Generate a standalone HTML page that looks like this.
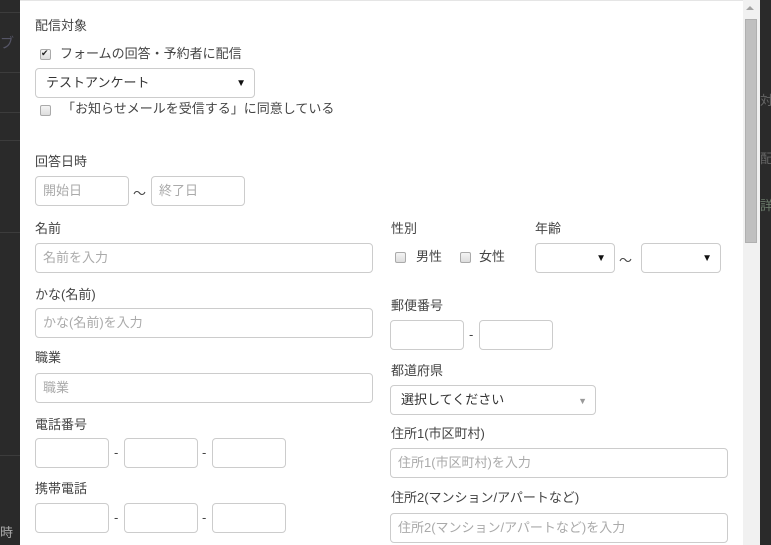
<!DOCTYPE html>
<html><head><meta charset="utf-8"><style>
*{box-sizing:border-box;margin:0;padding:0}
body{width:771px;height:545px;overflow:hidden;background:#2a2a2a;position:relative;font-family:"Liberation Sans","Noto Sans CJK JP",sans-serif;font-size:13px;color:#444}
.a{position:absolute;white-space:nowrap}
.l{line-height:16px}
.in{position:absolute;height:30px;border:1px solid #ccc;border-radius:4px;background:#fff;padding-left:7px;line-height:28px;color:#aaa;font-size:13px}
.cb{position:absolute;width:11px;height:11px;border:1px solid #aaa;border-radius:2px;background:linear-gradient(#f4f4f4,#ddd)}
.ar{position:absolute;right:8px;top:1px;font-size:10px;color:#111}
.ln{position:absolute;left:0;width:20px;height:1px;background:#3c3c3c}
</style></head><body>
<div class="ln" style="top:12px"></div><div class="ln" style="top:72px"></div><div class="ln" style="top:112px"></div><div class="ln" style="top:140px"></div><div class="ln" style="top:232px"></div><div class="ln" style="top:455px"></div>
<div class="a" style="left:0;top:33px;color:#556;font-size:14px">ブ</div>
<div class="a" style="left:0;top:522px;color:#aaa;font-size:13px">時</div>
<div class="a" style="left:760px;top:90px;color:#666;font-size:13px">対</div>
<div class="a" style="left:760px;top:148px;color:#666;font-size:13px">配</div>
<div class="a" style="left:760px;top:195px;color:#6a7a6a;font-size:13px">詳</div>
<div class="a" style="left:20px;top:0;width:723px;height:545px;background:#fff;border-top:1px solid #e5e5e5"></div>
<div class="a" style="left:743px;top:0;width:17px;height:545px;background:#f1f1f1"></div>
<div class="a" style="left:745px;top:19px;width:12px;height:224px;background:#c0c0c0;border:1px solid #b0b0b0"></div>
<div class="a" style="left:746px;top:6px;width:0;height:0;border-left:4px solid transparent;border-right:4px solid transparent;border-bottom:4px solid #a3a3a3"></div>

<div class="a l" style="left:35px;top:18px">配信対象</div>
<div class="cb" style="left:40px;top:49px"></div><div class="a" style="left:41px;top:48px;font-size:9px;line-height:11px;color:#222">✔</div>
<div class="a l" style="left:60px;top:46px">フォームの回答・予約者に配信</div>
<div class="in" style="left:35px;top:68px;width:220px;color:#333;padding-left:10px">テストアンケート<span class="ar">▼</span></div>
<div class="cb" style="left:40px;top:105px"></div>
<div class="a l" style="left:62px;top:101px">「お知らせメールを受信する」に同意している</div>

<div class="a l" style="left:35px;top:154px">回答日時</div>
<div class="in" style="left:35px;top:176px;width:94px">開始日</div>
<div class="a" style="left:133px;top:183px">～</div>
<div class="in" style="left:151px;top:176px;width:94px">終了日</div>

<div class="a l" style="left:35px;top:221px">名前</div>
<div class="in" style="left:35px;top:243px;width:338px">名前を入力</div>
<div class="a l" style="left:391px;top:221px">性別</div>
<div class="a l" style="left:535px;top:221px">年齢</div>
<div class="cb" style="left:395px;top:252px"></div><div class="a l" style="left:416px;top:249px">男性</div>
<div class="cb" style="left:460px;top:252px"></div><div class="a l" style="left:479px;top:249px">女性</div>
<div class="in" style="left:535px;top:243px;width:80px"><span class="ar">▼</span></div>
<div class="a" style="left:619px;top:250px">～</div>
<div class="in" style="left:641px;top:243px;width:80px"><span class="ar">▼</span></div>

<div class="a l" style="left:35px;top:287px">かな(名前)</div>
<div class="in" style="left:35px;top:308px;width:338px">かな(名前)を入力</div>
<div class="a l" style="left:391px;top:298px">郵便番号</div>
<div class="in" style="left:390px;top:320px;width:74px"></div>
<div class="a" style="left:469px;top:327px">-</div>
<div class="in" style="left:479px;top:320px;width:74px"></div>

<div class="a l" style="left:35px;top:350px">職業</div>
<div class="in" style="left:35px;top:373px;width:338px">職業</div>
<div class="a l" style="left:391px;top:363px">都道府県</div>
<div class="in" style="left:390px;top:385px;width:206px;color:#333;padding-left:10px">選択してください<span class="ar" style="color:#999;font-size:9px">▼</span></div>

<div class="a l" style="left:35px;top:417px">電話番号</div>
<div class="in" style="left:35px;top:438px;width:74px"></div>
<div class="a" style="left:114px;top:445px">-</div>
<div class="in" style="left:124px;top:438px;width:74px"></div>
<div class="a" style="left:202px;top:445px">-</div>
<div class="in" style="left:212px;top:438px;width:74px"></div>
<div class="a l" style="left:391px;top:426px">住所1(市区町村)</div>
<div class="in" style="left:390px;top:448px;width:338px">住所1(市区町村)を入力</div>

<div class="a l" style="left:35px;top:481px">携帯電話</div>
<div class="in" style="left:35px;top:503px;width:74px"></div>
<div class="a" style="left:114px;top:510px">-</div>
<div class="in" style="left:124px;top:503px;width:74px"></div>
<div class="a" style="left:202px;top:510px">-</div>
<div class="in" style="left:212px;top:503px;width:74px"></div>
<div class="a l" style="left:391px;top:490px">住所2(マンション/アパートなど)</div>
<div class="in" style="left:390px;top:513px;width:338px">住所2(マンション/アパートなど)を入力</div>
</body></html>
